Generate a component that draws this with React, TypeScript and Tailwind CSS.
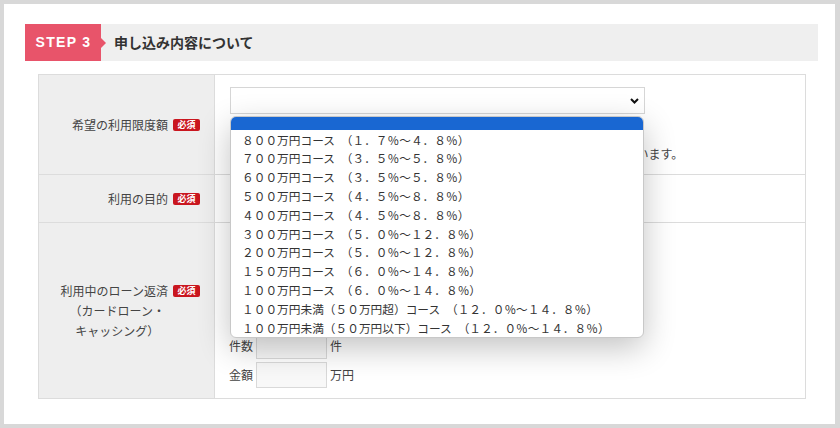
import { useState } from "react"

const courses = [
  "８００万円コース　（１．７％～４．８％）",
  "７００万円コース　（３．５％～５．８％）",
  "６００万円コース　（３．５％～５．８％）",
  "５００万円コース　（４．５％～８．８％）",
  "４００万円コース　（４．５％～８．８％）",
  "３００万円コース　（５．０％～１２．８％）",
  "２００万円コース　（５．０％～１２．８％）",
  "１５０万円コース　（６．０％～１４．８％）",
  "１００万円コース　（６．０％～１４．８％）",
  "１００万円未満（５０万円超）コース　（１２．０％～１４．８％）",
  "１００万円未満（５０万円以下）コース　（１２．０％～１４．８％）",
]

function Required() {
  return (
    <span className="ml-[5px] inline-flex h-[12px] w-[27px] items-center justify-center rounded-[2px] bg-[#c9161f] text-[9px] font-bold leading-none text-white">
      必須
    </span>
  )
}

function Chevron() {
  return (
    <svg width="9" height="6" viewBox="0 0 9 6" className="pointer-events-none absolute right-[6px] top-1/2 -translate-y-1/2">
      <path d="M1 1l3.5 3.5L8 1" fill="none" stroke="#111" strokeWidth="2" />
    </svg>
  )
}

function SelectBox({ width, height }: { width: string; height: string }) {
  return (
    <div className={`relative ${width} ${height}`}>
      <select className="h-full w-full appearance-none border border-[#d6d6d6] bg-white outline-none" defaultValue="">
        <option value=""></option>
      </select>
      <Chevron />
    </div>
  )
}

export default function App() {
  const [selected] = useState<number | null>(null)

  return (
    <div className="relative h-[428px] w-[840px] bg-[#d8d8d8] pb-[4px] pl-[4px] pr-[5px] pt-[4px] font-['Noto_Sans_CJK_JP','Noto_Sans',sans-serif] text-[12px] text-[#444]">
      <div className="h-full bg-white pl-[21px] pt-[20px]">
        {/* step header */}
        <div className="flex h-[37px] w-[793px] items-center bg-[#efefef]">
          <div className="flex h-full w-[76px] items-center justify-center bg-[#e8546a] pl-[1px] font-['Liberation_Sans',sans-serif] text-[14px] font-bold tracking-[1.3px] text-white">
            STEP 3
          </div>
          <div className="h-0 w-0 border-y-[5px] border-l-[5px] border-y-transparent border-l-[#e8546a]" />
          <h2 className="ml-[8px] text-[14px] font-bold text-[#333]">申し込み内容について</h2>
        </div>

        {/* form table */}
        <div className="ml-[13px] mt-[13px] w-[768px] border border-[#dcdcdc]">
          <div className="flex border-b border-[#dcdcdc]">
            <div className="flex w-[176px] items-center justify-end border-r border-[#dcdcdc] bg-[#eeeeee] pr-[14px]">
              希望の利用限度額
              <Required />
            </div>
            <div className="flex-1 pb-[10px] pl-[15px] pt-[12px]">
              <SelectBox width="w-[415px]" height="h-[27px]" />
              <p className="mt-[10px] leading-[20px]">※お借入れ可能額は審査により決定いたします。</p>
              <p className="leading-[20px]">審査の結果によっては、ご希望の利用限度額にはお応えできない場合がございます。</p>
            </div>
          </div>

          <div className="flex border-b border-[#dcdcdc]">
            <div className="flex w-[176px] items-center justify-end border-r border-[#dcdcdc] bg-[#eeeeee] pr-[14px]">
              利用の目的
              <Required />
            </div>
            <div className="flex-1 pb-[10px] pl-[15px] pt-[11px]">
              <SelectBox width="w-[260px]" height="h-[26px]" />
            </div>
          </div>

          <div className="flex">
            <div className="flex w-[176px] items-center justify-end border-r border-[#dcdcdc] bg-[#eeeeee] pr-[14px]">
              <div className="flex flex-col items-center leading-[20px]">
                <div className="flex items-center">
                  利用中のローン返済
                  <Required />
                </div>
                <div className="mr-[26px]">（カードローン・</div>
                <div className="mr-[26px]">キャッシング）</div>
              </div>
            </div>
            <div className="flex-1 pb-[10px] pl-[14px] pt-[6px] leading-[20px]">
              <p>ご利用中のカードローン・キャッシングについてご記入ください。</p>
              <p className="mt-[10px]">（お借入れがない場合は「０」とご入力ください）</p>
              <p className="mt-[10px]">※住宅ローン・自動車ローンは除きます。</p>
              <div className="mt-[24px] flex items-center gap-[3px]">
                <span>件数</span>
                <input className="h-[26px] w-[71px] border border-[#d9d9d9] bg-[#f8f8f8] outline-none" />
                <span>件</span>
              </div>
              <div className="mt-[3px] flex items-center gap-[3px]">
                <span>金額</span>
                <input className="h-[26px] w-[71px] border border-[#d9d9d9] bg-[#f8f8f8] outline-none" />
                <span>万円</span>
              </div>
            </div>
          </div>
        </div>
      </div>

      {/* open dropdown list of the first select */}
      <div className="absolute left-[230px] top-[116px] w-[414px] overflow-hidden rounded-[6px] border border-[#c8c8c8] bg-white shadow-[0_10px_32px_rgba(0,0,0,0.24)]">
        <div className="h-[13px] bg-[#1967d2]" />
        {courses.map((c, i) => (
          <div
            key={c}
            className={`flex h-[18.8px] items-center pl-[11px] text-[11.7px] ${selected === i ? "bg-[#1967d2] text-white" : "text-[#333]"}`}
          >
            {c}
          </div>
        ))}
      </div>
    </div>
  )
}
